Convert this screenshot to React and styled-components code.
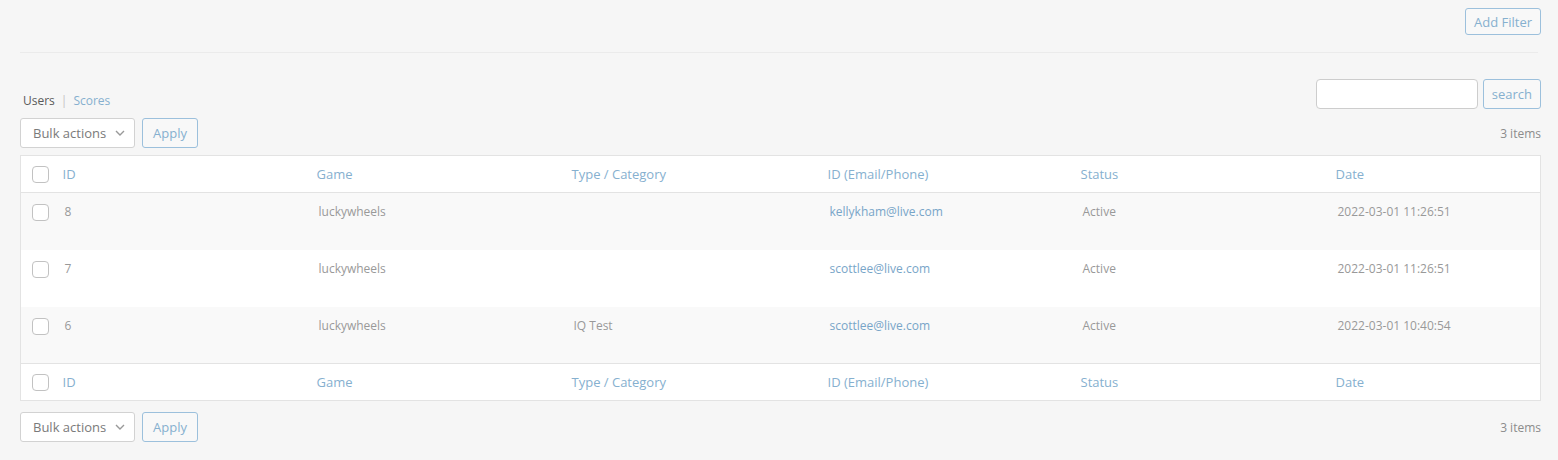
import React from 'react'
import styled, { createGlobalStyle } from 'styled-components'

const GlobalStyle = createGlobalStyle`
  html, body {
    margin: 0;
    padding: 0;
    background: #f6f6f6;
    font-family: "Open Sans", "Noto Sans", sans-serif;
    color: #666;
  }
`

const Page = styled.div`
  padding: 8px 17px 0 20px;
  width: 1558px;
  box-sizing: border-box;
`

const TopBar = styled.div`
  display: flex;
  justify-content: flex-end;
`

const OutlineButton = styled.button`
  height: ${({ h }) => h || 30}px;
  padding: 0 ${({ px }) => px || 10}px;
  background: #f8f8f8;
  border: 1px solid #9cc0dc;
  border-radius: 3px;
  color: #86b0cf;
  font-family: inherit;
  font-size: 13px;
  cursor: pointer;
`

const Divider = styled.div`
  margin: 17px 3px 0 0;
  border-top: 1px solid #ebebeb;
`

const SearchRow = styled.div`
  display: flex;
  justify-content: space-between;
  align-items: flex-end;
  margin-top: 26px;
`

const SubNav = styled.div`
  display: flex;
  align-items: center;
  gap: 6px;
  font-size: 12px;
  padding: 0 0 0 3px;
`

const SubLink = styled.span`
  color: ${({ current }) => (current ? '#5a5a5a' : '#86b0cf')};
`

const Sep = styled.span`
  color: #c4c4c4;
`

const SearchBox = styled.div`
  display: flex;
  gap: 5px;
`

const SearchInput = styled.input`
  width: 162px;
  height: 30px;
  box-sizing: border-box;
  border: 1px solid #cdcdcd;
  border-radius: 4px;
  background: #fff;
`

const TableNav = styled.div`
  display: flex;
  justify-content: space-between;
  align-items: center;
  margin-top: ${({ mt }) => mt}px;
`

const Actions = styled.div`
  display: flex;
  gap: 7px;
`

const Select = styled.div`
  width: 115px;
  height: 30px;
  box-sizing: border-box;
  border: 1px solid #d2d2d2;
  border-radius: 3px;
  background: #fff;
  display: flex;
  align-items: center;
  justify-content: space-between;
  padding: 0 8px 0 12px;
  font-size: 13px;
  color: #7a7a7a;
`

const Count = styled.span`
  font-size: 12px;
  color: #8c8c8c;
`

const Table = styled.table`
  width: 100%;
  margin-top: 7px;
  border-collapse: collapse;
  background: #fff;
  border: 1px solid #e3e3e3;
  table-layout: fixed;
`

const HeadCell = styled.th`
  text-align: left;
  font-weight: 400;
  font-size: 13px;
  color: #86b0cf;
  height: 37px;
  padding: 0;
  border-${({ side }) => side}: 1px solid #e3e3e3;
  box-sizing: border-box;
`

const Row = styled.tr`
  background: ${({ striped }) => (striped ? '#f9f9f9' : '#fff')};
`

const Cell = styled.td`
  height: 57px;
  vertical-align: top;
  padding: 10px 0 0 2px;
  font-size: 12px;
  color: ${({ link }) => (link ? '#78a5c8' : '#999')};
  box-sizing: border-box;
`

const CheckCell = styled.td`
  padding: 11px 0 0 11px;
  vertical-align: top;
  box-sizing: border-box;
`

const CheckHead = styled.th`
  padding: 0 0 0 11px;
  height: 37px;
  box-sizing: border-box;
  border-${({ side }) => side}: 1px solid #e3e3e3;
`

const Check = styled.span`
  display: block;
  width: 15px;
  height: 15px;
  border: 1px solid #c2c2c2;
  border-radius: 4px;
  background: #fff;
`

const Chevron = () => (
  <svg width="12" height="12" viewBox="0 0 12 12" fill="none">
    <path d="M2 4l4 4 4-4" stroke="#999" strokeWidth="1.4" />
  </svg>
)

const columns = ['ID', 'Game', 'Type / Category', 'ID (Email/Phone)', 'Status', 'Date']
const widths = [254, 255, 256, 253, 255]

const rows = [
  { id: 8, game: 'luckywheels', type: '', email: 'kellykham@live.com', status: 'Active', date: '2022-03-01 11:26:51' },
  { id: 7, game: 'luckywheels', type: '', email: 'scottlee@live.com', status: 'Active', date: '2022-03-01 11:26:51' },
  { id: 6, game: 'luckywheels', type: 'IQ Test', email: 'scottlee@live.com', status: 'Active', date: '2022-03-01 10:40:54' },
]

const HeaderRow = ({ side }) => (
  <tr>
    <CheckHead side={side}>
      <Check />
    </CheckHead>
    {columns.map((c) => (
      <HeadCell key={c} side={side}>
        {c}
      </HeadCell>
    ))}
  </tr>
)

const BulkBar = ({ mt }) => (
  <TableNav mt={mt}>
    <Actions>
      <Select>
        Bulk actions <Chevron />
      </Select>
      <OutlineButton>Apply</OutlineButton>
    </Actions>
    <Count>3 items</Count>
  </TableNav>
)

const App = () => (
  <Page>
    <GlobalStyle />
    <TopBar>
      <OutlineButton h={27} px={8}>Add Filter</OutlineButton>
    </TopBar>
    <Divider />
    <SearchRow>
      <SubNav>
        <SubLink current>Users</SubLink>
        <Sep>|</Sep>
        <SubLink>Scores</SubLink>
      </SubNav>
      <SearchBox>
        <SearchInput />
        <OutlineButton px={8}>search</OutlineButton>
      </SearchBox>
    </SearchRow>
    <BulkBar mt={9} />
    <Table>
      <colgroup>
        <col style={{ width: 42 }} />
        {widths.map((w, i) => (
          <col key={i} style={{ width: w }} />
        ))}
        <col />
      </colgroup>
      <thead>
        <HeaderRow side="bottom" />
      </thead>
      <tbody>
        {rows.map((r, i) => (
          <Row key={r.id} striped={i % 2 === 0}>
            <CheckCell>
              <Check />
            </CheckCell>
            <Cell>{r.id}</Cell>
            <Cell>{r.game}</Cell>
            <Cell>{r.type}</Cell>
            <Cell link>{r.email}</Cell>
            <Cell>{r.status}</Cell>
            <Cell>{r.date}</Cell>
          </Row>
        ))}
      </tbody>
      <tfoot>
        <HeaderRow side="top" />
      </tfoot>
    </Table>
    <BulkBar mt={11} />
  </Page>
)

export default App
